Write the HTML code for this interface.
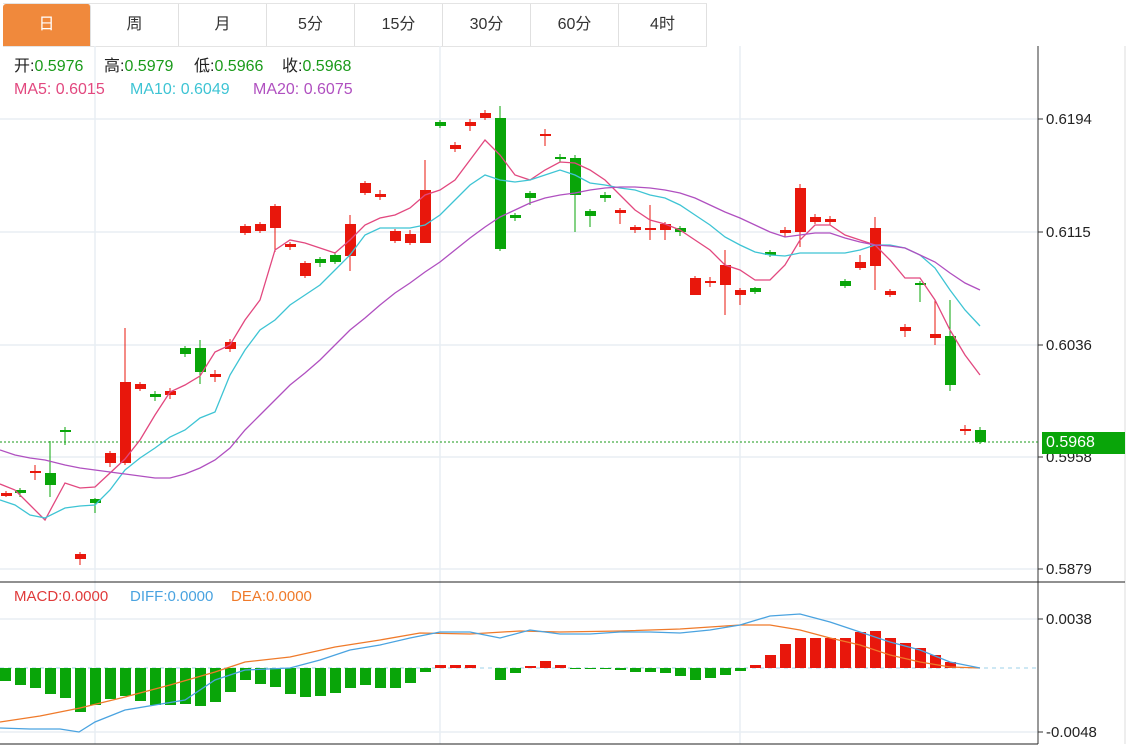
<!DOCTYPE html>
<html><head><meta charset="utf-8"><style>
html,body{margin:0;padding:0;background:#fff;width:1134px;height:746px;overflow:hidden;font-family:"Liberation Sans","Noto Sans CJK SC",sans-serif}
.tabs{position:absolute;left:3px;top:3px;height:42px;display:flex;border-top:1px solid #e4e4e4;border-bottom:1px solid #e4e4e4}
.tabs div{width:87px;height:42px;line-height:42px;text-align:center;font-size:16px;color:#333;border-right:1px solid #e0e0e0}
.tabs div.on{background:#f0893c;color:#fff;border-radius:3px 3px 0 0}
.t{position:absolute;font-size:16px;white-space:pre;line-height:18px}
svg{position:absolute;left:0;top:0}
</style></head><body>
<div class="tabs"><div class="on">日</div><div>周</div><div>月</div><div>5分</div><div>15分</div><div>30分</div><div>60分</div><div>4时</div></div>
<svg id="s" width="1134" height="746" xmlns="http://www.w3.org/2000/svg"></svg>
<div class="t" style="left:14px;top:58px;color:#222">开:<span style="color:#1a9a1a">0.5976</span></div>
<div class="t" style="left:104px;top:58px;color:#222">高:<span style="color:#1a9a1a">0.5979</span></div>
<div class="t" style="left:194px;top:58px;color:#222">低:<span style="color:#1a9a1a">0.5966</span></div>
<div class="t" style="left:282px;top:58px;color:#222">收:<span style="color:#1a9a1a">0.5968</span></div>
<div class="t" style="left:14px;top:81px;color:#e2487f">MA5: 0.6015</div>
<div class="t" style="left:130px;top:81px;color:#3ec4d4">MA10: 0.6049</div>
<div class="t" style="left:253px;top:81px;color:#b050c0">MA20: 0.6075</div>
<div class="t" style="left:14px;top:588px;font-size:15px;color:#e03a3a">MACD:0.0000</div>
<div class="t" style="left:130px;top:588px;font-size:15px;color:#4aa3e0">DIFF:0.0000</div>
<div class="t" style="left:231px;top:588px;font-size:15px;color:#ef7a2a">DEA:0.0000</div>
<div style="position:absolute;left:1042px;top:432px;width:83px;height:22px;background:#09a509;color:#fff;font-size:16px;line-height:22px;padding-left:4px;box-sizing:border-box">0.5968</div>
<script>
var s=document.getElementById('s'),h='';
function L(x1,y1,x2,y2,c,w,d){h+='<line x1="'+x1+'" y1="'+y1+'" x2="'+x2+'" y2="'+y2+'" stroke="'+c+'" stroke-width="'+(w||1)+'"'+(d?' stroke-dasharray="'+d+'"':'')+'/>';}
function T(x,y,t){h+='<text x="'+x+'" y="'+y+'" font-size="15" fill="#222" font-family="Liberation Sans">'+t+'</text>';}
[119,232,345,457,569,619,732].forEach(function(y){L(0,y,1038,y,'#e8eef4',1.5);});
[95,440,740].forEach(function(x){L(x,46,x,744,'#e8eef4',1.5);});
L(1038,46,1038,744,'#333');L(1125,46,1125,744,'#ddd');
L(0,582,1125,582,'#222');L(0,744,1038,744,'#222');
[[119,'0.6194'],[232,'0.6115'],[345,'0.6036'],[457,'0.5958'],[569,'0.5879'],[619,'0.0038'],[732,'-0.0048']].forEach(function(a){L(1038,a[0],1043,a[0],'#333');T(1046,a[0]+5,a[1]);});
L(0,442,1038,442,'#1a9a1a',1,'2,2');
L(0,668,1038,668,'#9cd0ea',1,'4,4');
var C=[[6,493,496,491,497,'r'],[20,490,493,488,497,'g'],[35,471,473,465,480,'r'],[50,473,485,441,497,'g'],[65,430,432,427,445,'g'],[80,554,559,552,565,'r'],[95,499,503,498,513,'g'],[110,453,463,451,467,'r'],[125,382,463,328,465,'r'],[140,384,389,382,391,'r'],[155,394,397,391,401,'g'],[170,391,395,388,399,'r'],[185,348,354,346,357,'g'],[200,348,372,340,384,'g'],[215,374,377,370,382,'r'],[230,342,349,339,352,'r'],[245,226,233,224,235,'r'],[260,224,231,222,233,'r'],[275,206,228,204,252,'r'],[290,244,247,242,250,'r'],[305,263,276,261,278,'r'],[320,259,263,257,267,'g'],[335,255,262,252,264,'g'],[350,224,256,215,271,'r'],[365,183,193,181,195,'r'],[380,194,197,190,200,'r'],[395,231,241,229,243,'r'],[410,234,243,230,245,'r'],[425,190,243,160,243,'r'],[440,122,126,120,128,'g'],[455,145,149,142,152,'r'],[470,122,126,119,131,'r'],[485,113,118,110,120,'r'],[500,118,249,106,251,'g'],[515,215,218,213,221,'g'],[530,193,198,191,205,'g'],[545,134,136,129,146,'r'],[560,157,159,154,162,'g'],[575,158,195,155,232,'g'],[590,211,216,209,227,'g'],[605,195,198,192,202,'g'],[620,210,213,208,224,'r'],[635,227,230,225,233,'r'],[650,228,230,205,240,'r'],[665,224,230,222,240,'r'],[680,228,232,226,236,'g'],[695,278,295,276,295,'r'],[710,281,283,277,287,'r'],[725,265,285,250,315,'r'],[740,290,295,288,305,'r'],[755,288,292,287,294,'g'],[770,252,255,250,257,'g'],[785,230,233,227,237,'r'],[800,188,232,184,247,'r'],[815,217,222,214,224,'r'],[830,219,222,216,225,'r'],[845,281,286,279,288,'g'],[860,262,268,255,270,'r'],[875,228,266,217,290,'r'],[890,291,295,289,297,'r'],[905,327,331,324,337,'r'],[920,283,285,281,302,'g'],[935,334,338,300,345,'r'],[950,336,385,300,391,'g'],[965,429,431,425,435,'r'],[980,430,442,427,444,'g']];
C.forEach(function(c){var col=c[5]=='r'?'#e8170c':'#09a509';L(c[0],c[3],c[0],c[4],col);h+='<rect x="'+(c[0]-5)+'" y="'+c[1]+'" width="11" height="'+Math.max(2,c[2]-c[1])+'" fill="'+col+'"/>';});
function P(pts,c){h+='<polyline fill="none" stroke="'+c+'" stroke-width="1.3" points="'+pts+'"/>';}
P('0,484 15,490 30,505 45,520 65,483 80,488 95,487 110,473 125,459 140,440 155,415 170,392 185,385 200,376 215,352 230,345 245,320 260,300 275,250 290,240 305,243 320,248 335,253 350,240 365,225 380,218 395,215 410,208 425,195 440,190 455,180 470,160 485,140 500,155 515,175 530,180 545,170 560,162 575,163 590,170 605,180 620,195 635,210 650,220 665,224 680,230 695,240 710,250 725,265 740,270 755,280 770,280 785,265 800,240 815,225 830,225 845,235 860,240 875,245 890,260 905,278 920,278 935,300 950,330 965,355 980,375','#e2487f');
P('0,500 15,505 30,515 45,518 65,508 80,506 95,505 110,490 125,470 140,458 155,448 170,437 185,430 200,418 215,412 230,375 245,350 260,330 275,320 290,305 305,295 320,285 335,270 350,255 365,235 380,228 395,228 410,228 425,225 440,215 455,200 470,185 485,175 500,180 515,182 530,180 545,175 560,170 575,175 590,183 605,185 620,188 635,190 650,195 665,198 680,205 695,215 710,225 725,237 740,245 755,252 770,255 785,256 800,253 815,253 830,253 845,253 860,250 875,245 890,245 905,248 920,255 935,268 950,290 965,310 980,326','#3ec4d4');
P('0,450 15,455 30,458 45,460 65,465 80,468 95,470 110,472 125,474 140,476 155,478 170,478 185,474 200,468 215,460 230,448 245,430 260,415 275,400 290,385 305,373 320,360 335,345 350,330 365,318 380,305 395,293 410,283 425,272 440,262 455,250 470,238 485,227 500,217 515,210 530,203 545,198 560,195 575,193 590,190 605,188 620,187 635,187 650,188 665,190 680,193 695,198 710,205 725,212 740,218 755,225 770,232 785,237 800,235 815,233 830,233 845,238 860,242 875,245 890,246 905,248 920,255 935,262 950,273 965,283 980,290','#b050c0');
var M=[13,17,20,26,30,44,37,31,28,33,37,37,36,38,34,24,12,16,19,26,29,28,25,20,17,20,20,15,4,-3,-3,-3,0,12,5,-2,-7,-3,1,1,1,2,4,4,5,8,12,10,7,3,-3,-13,-24,-30,-30,-30,-30,-36,-37,-30,-25,-20,-13,-6,0,0];
M.forEach(function(v,i){if(!v)return;var x=5+15*i-5;if(v>0)h+='<rect x="'+x+'" y="668" width="11" height="'+v+'" fill="#09a509"/>';else h+='<rect x="'+x+'" y="'+(668+v)+'" width="11" height="'+(-v)+'" fill="#e8170c"/>';});
P('0,722 40,716 80,708 125,697 170,685 215,672 245,662 290,657 335,647 380,640 420,633 470,634 520,631 560,632 620,631 680,629 740,625 770,625 800,630 830,638 860,645 890,655 920,662 950,667 980,668','#ef7a2a');
P('0,728 30,729 60,729 79,732 95,722 125,710 155,705 185,700 215,680 245,670 290,668 320,660 350,650 380,645 410,638 440,632 470,632 500,638 530,630 560,634 590,634 620,632 650,632 680,633 710,630 740,625 770,616 800,614 830,622 860,632 890,642 920,650 950,662 980,668','#4aa3e0');
s.innerHTML=h;
</script>
</body></html>
